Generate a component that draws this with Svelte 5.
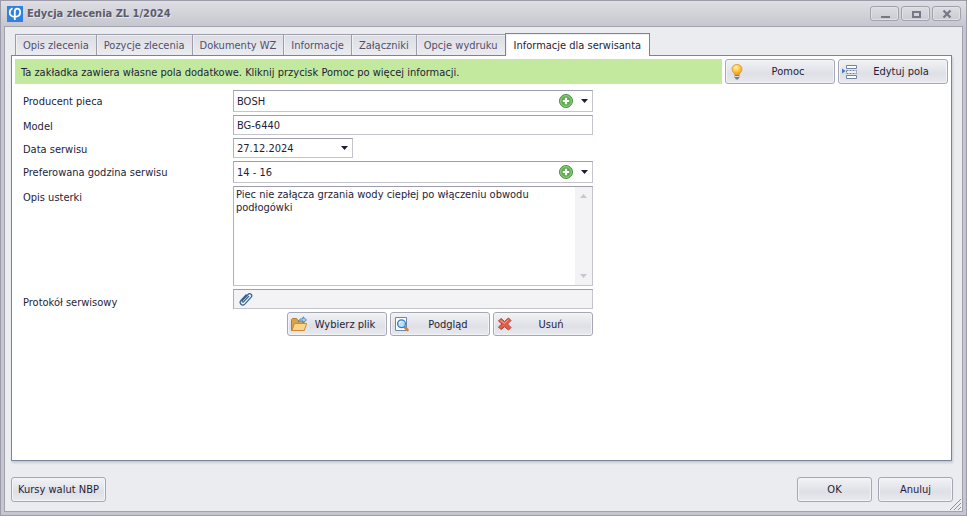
<script lang="ts">
	let activeTab = $state('Informacje dla serwisanta');
	let producer = $state('BOSH');
	let model = $state('BG-6440');
	let serviceDate = $state('27.12.2024');
	let hours = $state('14 - 16');
	let description = $state(
		'Piec nie załącza grzania wody ciepłej po włączeniu obwodu podłogówki'
	);

	const tabs = [
		'Opis zlecenia',
		'Pozycje zlecenia',
		'Dokumenty WZ',
		'Informacje',
		'Załączniki',
		'Opcje wydruku',
		'Informacje dla serwisanta'
	];
</script>

{#snippet plus()}
	<svg width="14" height="14" viewBox="0 0 14 14">
		<circle cx="7" cy="7" r="6.5" fill="#5fae4c" stroke="#4b9140" />
		<circle cx="7" cy="7" r="5.4" fill="none" stroke="#a5d798" stroke-width=".8" />
		<path d="M7 3.8v6.4M3.8 7h6.4" stroke="#fff" stroke-width="2.2" />
	</svg>
{/snippet}

{#snippet arrow()}
	<svg class="arrow" width="7" height="4" viewBox="0 0 7 4"><path d="M0 0h7L3.5 4z" /></svg>
{/snippet}

<div class="window">
	<header>
		<svg class="logo" width="16" height="16" viewBox="0 0 16 16">
			<rect width="16" height="16" fill="#2f80e0" />
			<path
				d="M5.5 2.3C3.600 3.200 2.700 4.700 2.700 6.500c0 2.600 2 4.300 5 4.300 3.300 0 5.500-1.700 5.500-4.500 0-2.300-1.200-3.700-2.900-3.700-1.700 0-2.500 1.200-2.500 3.200V14"
				fill="none"
				stroke="#fff"
				stroke-width="1.8"
			/>
		</svg>
		<h1>Edycja zlecenia ZL 1/2024</h1>
		<div class="controls">
			<button aria-label="Minimalizuj">
				<svg width="12" height="10" viewBox="0 0 12 10"><path d="M2 7h9v2H2z" fill="#777785" /></svg>
			</button>
			<button aria-label="Maksymalizuj">
				<svg width="12" height="10" viewBox="0 0 12 10">
					<path d="M2 2h9v7H2zM4 4v3h5V4z" fill="#777785" fill-rule="evenodd" />
				</svg>
			</button>
			<button aria-label="Zamknij">
				<svg width="12" height="10" viewBox="0 0 12 10">
					<path d="M2.500 1.500l7 7M9.500 1.500l-7 7" stroke="#777785" stroke-width="2.200" />
				</svg>
			</button>
		</div>
	</header>

	<main>
		<div class="tabs" role="tablist">
			{#each tabs as tab}
				<button
					role="tab"
					class:active={tab === activeTab}
					aria-selected={tab === activeTab}
					onclick={() => (activeTab = tab)}>{tab}</button
				>
			{/each}
		</div>

		<section class="panel">
			<div class="notice">
				<p>Ta zakładka zawiera własne pola dodatkowe. Kliknij przycisk Pomoc po więcej informacji.</p>
				<button class="btn wide">
					<svg width="16" height="16" viewBox="0 0 16 16">
						<defs>
							<radialGradient id="bulb" cx=".4" cy=".3" r=".8">
								<stop offset="0" stop-color="#fff3b0" />
								<stop offset=".5" stop-color="#fdc53d" />
								<stop offset="1" stop-color="#e58a1c" />
							</radialGradient>
						</defs>
						<path
							d="M8 .5c-3 0-5 2-5 4.700 0 2.500 2.300 3.300 2.600 5.300h4.800C10.700 8.500 13 7.700 13 5.200 13 2.500 11 .5 8 .5z"
							fill="url(#bulb)"
							stroke="#dd942c"
							stroke-width=".8"
						/>
						<path d="M5.600 11h4.800v2.200L9 15.500H7l-1.400-2.300z" fill="#757d92" />
						<path d="M5.600 12.500h4.800" stroke="#d8dce6" />
					</svg>
					<span>Pomoc</span>
				</button>
				<button class="btn wide">
					<svg width="16" height="16" viewBox="0 0 16 16">
						<path d="M0 4.500L3.500 7 0 9.500z" fill="#3f78c0" />
						<path
							d="M4.500 1.500h10v3h-10zM4.500 11.500h10v3h-10z"
							fill="#fff"
							stroke="#7184a4"
						/>
						<path d="M4.500 6.500h10v3h-10z" fill="#eef1f6" stroke="#7184a4" stroke-dasharray="2 1" />
					</svg>
					<span>Edytuj pola</span>
				</button>
			</div>

			<form onsubmit={(e) => e.preventDefault()}>
				<label for="producer">Producent pieca</label>
				<div class="combo">
					<select id="producer" class="tall" bind:value={producer}>
						<option>BOSH</option>
					</select>
					<button type="button" class="add" aria-label="Dodaj producenta">{@render plus()}</button>
					{@render arrow()}
				</div>

				<label for="model" class="low">Model</label>
				<input id="model" bind:value={model} />

				<label for="date" class="low">Data serwisu</label>
				<div class="combo date">
					<select id="date" bind:value={serviceDate}>
						<option>27.12.2024</option>
					</select>
					{@render arrow()}
				</div>

				<label for="hours">Preferowana godzina serwisu</label>
				<div class="combo">
					<select id="hours" class="tall" bind:value={hours}>
						<option>14 - 16</option>
					</select>
					<button type="button" class="add" aria-label="Dodaj godziny">{@render plus()}</button>
					{@render arrow()}
				</div>

				<label for="description" class="top">Opis usterki</label>
				<div class="memo">
					<textarea id="description" bind:value={description}></textarea>
					<div class="scroll">
						<svg width="7" height="4" viewBox="0 0 7 4"><path d="M0 4h7L3.500 0z" /></svg>
						<svg width="7" height="4" viewBox="0 0 7 4"><path d="M0 0h7L3.500 4z" /></svg>
					</div>
				</div>

				<label for="protocol" class="bottom">Protokół serwisowy</label>
				<div class="combo">
					<input id="protocol" class="file" readonly />
					<svg class="clip" width="16" height="16" viewBox="0 0 16 16">
						<path
							d="M11 5l-5.500 5.800c-.8.800-2-.2-1.200-1.200L10 3.500c2-2 5 .4 3.200 2.700l-6.400 6.900c-2.600 2.500-6.300-.8-3.900-3.700L8.500 3.500"
							fill="none"
							stroke="#33608f"
							stroke-width="1.200"
						/>
					</svg>
				</div>

				<div class="actions">
					<button type="button" class="btn">
						<svg width="16" height="16" viewBox="0 0 16 16">
							<path d="M.5 14.500v-11l1-1h4l1.500 2h6v10z" fill="#dda04a" stroke="#b97a2b" />
							<path d="M1 14.500L3.500 7.500h12.200l-2.500 7z" fill="#fbd587" stroke="#c98a32" />
							<path
								d="M7.500 6c.2-2.500 2-3.500 4.500-3.300V.8L15.500 4 12 6.800V5C10 4.800 8.500 5 7.500 6z"
								fill="#9fd0ee"
								stroke="#3a77ad"
								stroke-width=".8"
							/>
						</svg>
						<span>Wybierz plik</span>
					</button>
					<button type="button" class="btn">
						<svg width="16" height="16" viewBox="0 0 16 16">
							<path d="M1.500 1.500h11v13h-11z" fill="#fff" stroke="#6b86b3" />
							<path d="M10.500 11l3 3" stroke="#c9843a" stroke-width="2.600" stroke-linecap="round" />
							<circle cx="7.500" cy="7.800" r="3.900" fill="#b5e2fa" stroke="#3f79b5" stroke-width="1.300" />
							<path d="M5.300 7.500c.2-1.200 1-1.800 2.200-1.900" fill="none" stroke="#fff" />
						</svg>
						<span>Podgląd</span>
					</button>
					<button type="button" class="btn">
						<svg width="16" height="16" viewBox="0 0 16 16">
							<path
								d="M4 2.500l3.500 3 4-3.500 2.500 2.500L10.500 8l3.500 3.500-2.500 2.500-4-3.300L4 13.500 1.500 11 5 8 1.500 5z"
								fill="#e0604e"
								stroke="#b93a30"
								stroke-linejoin="round"
							/>
							<path d="M3.500 4.500l4 2.700 4-3.500" fill="none" stroke="#f5a595" />
						</svg>
						<span>Usuń</span>
					</button>
				</div>
			</form>
		</section>

		<footer>
			<button class="btn rates">Kursy walut NBP</button>
			<button class="btn">OK</button>
			<button class="btn">Anuluj</button>
		</footer>
		<svg class="grip" width="11" height="11" viewBox="0 0 11 11">
			<path d="M0 11L11 0M4 11l7-7M8 11l3-3" stroke="#8f8f9b" />
		</svg>
	</main>
</div>

<style>
	:global(body) {
		margin: 0;
	}

	.window {
		box-sizing: border-box;
		min-height: 100vh;
		display: flex;
		flex-direction: column;
		padding: 0 3px 3px;
		border: 1px solid #9c9caa;
		background: #c6c6d0;
		font-family: 'DejaVu Sans Condensed', 'DejaVu Sans', sans-serif;
		font-size: 11px;
		line-height: 13px;
		color: #1e1e38;
	}

	button,
	input,
	select,
	textarea {
		box-sizing: border-box;
		margin: 0;
		font: inherit;
		color: inherit;
		border-radius: 0;
		outline: none;
	}

	svg {
		display: block;
		flex: none;
	}

	header {
		display: flex;
		align-items: center;
		height: 25px;
		margin: 0 -3px;
		padding: 0 5px 0 6px;
		background: linear-gradient(#dedee3, #c6c6cf);
	}

	h1 {
		flex: 1;
		margin: 0 0 0 4px;
		font-size: 11px;
		font-weight: bold;
		color: #5c5c6b;
		text-shadow: 1px 1px 0 #e6e6ec;
	}

	.controls {
		display: flex;
		gap: 2px;
	}

	.controls button {
		display: flex;
		align-items: center;
		justify-content: center;
		width: 29px;
		height: 15px;
		padding: 0;
		border: 1px solid #a2a2af;
		border-radius: 3px;
		background: linear-gradient(#dcdce1, #cbcbd3);
		box-shadow: inset 0 0 0 1px #e0e0e6;
	}

	main {
		position: relative;
		flex: 1;
		display: flex;
		flex-direction: column;
		padding: 6px 10px 9px 6px;
		border: 1px solid #a2a2af;
		background: #ebecf0;
	}

	.tabs {
		display: flex;
		align-items: flex-end;
		height: 23px;
		padding-left: 5px;
		margin-bottom: -1px;
		z-index: 1;
	}

	.tabs button {
		height: 21px;
		padding: 0 7px;
		margin: 0 0 1px -1px;
		border: 1px solid #9d9dac;
		border-bottom: 0;
		background: linear-gradient(#dcdde3, #ebecf0);
		box-shadow: inset 1px 1px 0 #f0f1f4;
		color: #50506a;
	}

	.tabs .active {
		height: 23px;
		margin-bottom: 0;
		padding: 0 8px;
		border-color: #73869c;
		background: #fff;
		color: #1e1e38;
	}

	.panel {
		flex: 1;
		padding: 3px;
		border: 1px solid #73869c;
		background: #fff;
		box-shadow: 1px 2px 2px #c9cad1;
	}

	.notice {
		display: flex;
		gap: 3px;
	}

	.notice p {
		flex: 1;
		margin: 0;
		padding: 7px 6px 5px;
		background: #c2e99e;
	}

	.btn {
		display: flex;
		align-items: center;
		justify-content: center;
		width: 100px;
		height: 24px;
		padding: 0 3px;
		border: 1px solid #a6a7b4;
		border-radius: 3px;
		background: linear-gradient(#f2f3f6, #dfe0e6 60%, #e9eaee);
		box-shadow: inset 0 0 0 1px #f3f4f7;
	}

	.btn span {
		flex: 1;
	}

	.btn.wide {
		width: 110px;
		height: 25px;
	}

	form {
		display: grid;
		grid-template-columns: 210px minmax(0, 360px);
		gap: 3px 0;
		align-items: center;
		padding: 6px 8px;
	}

	input,
	select,
	.memo {
		display: block;
		box-sizing: border-box;
		width: 100%;
		height: 20px;
		padding: 0 3px;
		border: 1px solid #c3c4ce;
		border-top-color: #9d9dac;
		border-left-color: #aeafbb;
		background: #fff;
	}

	select {
		appearance: none;
	}

	.tall {
		height: 22px;
	}

	.combo {
		position: relative;
	}

	.date {
		width: 120px;
	}

	.arrow {
		position: absolute;
		top: 50%;
		right: 5px;
		margin-top: -2px;
		fill: #1e1e38;
		pointer-events: none;
	}

	.add {
		position: absolute;
		top: 4px;
		right: 20px;
		padding: 0;
		border: 0;
		background: none;
	}

	.low {
		padding-top: 2px;
	}

	.top {
		align-self: start;
		padding-top: 5px;
	}

	.bottom {
		align-self: end;
	}

	.memo {
		display: flex;
		height: 100px;
		padding: 0;
	}

	textarea {
		flex: 1;
		padding: 1px 2px;
		border: 0;
		background: none;
		overflow: hidden;
		resize: none;
	}

	.scroll {
		display: flex;
		flex-direction: column;
		align-items: center;
		justify-content: space-between;
		width: 17px;
		padding: 7px 0;
		box-sizing: border-box;
		background: #f3f3f6;
		fill: #c6c7cf;
	}

	.file {
		background: #f3f3f6;
	}

	.clip {
		position: absolute;
		left: 5px;
		top: 2px;
	}

	.actions {
		grid-column: 2;
		display: flex;
		justify-content: flex-end;
		gap: 3px;
	}

	footer {
		display: flex;
		gap: 6px;
		margin-top: 16px;
		margin-right: -1px;
	}

	footer .btn {
		width: 75px;
		height: 25px;
	}

	footer .rates {
		width: 95px;
		margin-right: auto;
	}

	.grip {
		position: absolute;
		right: 1px;
		bottom: 1px;
	}
</style>
